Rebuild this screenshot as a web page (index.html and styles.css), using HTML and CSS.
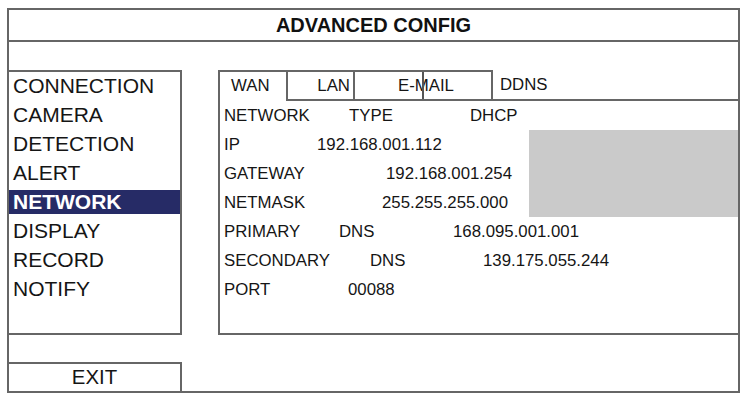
FILE: index.html
```html
<!DOCTYPE html>
<html lang="en">
<head>
    <meta charset="UTF-8">
    <title>Advanced Config</title>
    <link rel="stylesheet" href="styles.css">
</head>
<body>
    <div class="frame">
        <div class="title">ADVANCED CONFIG</div>
        <div class="main">
            <div class="side">
                <ul class="menu">
                    <li>CONNECTION</li>
                    <li>CAMERA</li>
                    <li>DETECTION</li>
                    <li>ALERT</li>
                    <li class="active">NETWORK</li>
                    <li>DISPLAY</li>
                    <li>RECORD</li>
                    <li>NOTIFY</li>
                </ul>
                <div class="exit">EXIT</div>
            </div>
            <div class="panel">
                <div class="tabs">
                    <div class="tab tab-wan">WAN</div>
                    <div class="tab tab-lan">LAN</div>
                    <div class="tab tab-mail">E-MAIL</div>
                    <div class="tab tab-ddns">DDNS</div>
                </div>
                <div class="fields">
                    <div class="row wide r-network"><span>NETWORK</span><span>TYPE</span><span>DHCP</span></div>
                    <div class="row r-ip"><span>IP</span><span>192.168.001.112</span></div>
                    <div class="preview"></div>
                    <div class="row r-gateway"><span>GATEWAY</span><span>192.168.001.254</span></div>
                    <div class="row r-netmask"><span>NETMASK</span><span>255.255.255.000</span></div>
                    <div class="row wide r-primary"><span>PRIMARY</span><span>DNS</span><span>168.095.001.001</span></div>
                    <div class="row wide r-secondary"><span>SECONDARY</span><span>DNS</span><span>139.175.055.244</span></div>
                    <div class="row wide r-port"><span>PORT</span><span>00088</span></div>
                </div>
            </div>
        </div>
    </div>
</body>
</html>
```
FILE: styles.css
```css
body {
    margin: 8px 0 0 7px;
    background-color: #fff;
    font-family: "Liberation Sans", Arial, sans-serif;
    color: #151515;
}

.frame {
    box-sizing: border-box;
    width: 733px;
    height: 385px;
    border: 2px solid #666;
    display: flex;
    flex-direction: column;
}

.title {
    box-sizing: border-box;
    height: 32px;
    border-bottom: 2px solid #666;
    display: flex;
    align-items: center;
    justify-content: center;
    font-size: 20px;
    font-weight: bold;
    color: #111;
}

.main {
    flex: 1;
    display: flex;
}

/* left column */
.side {
    width: 173px;
    display: flex;
    flex-direction: column;
}

.menu {
    box-sizing: border-box;
    list-style: none;
    margin: 28px 0 0 0;
    padding: 2px 0 0 0;
    height: 265px;
    border-top: 2px solid #666;
    border-right: 2px solid #666;
    border-bottom: 2px solid #666;
}

.menu li {
    height: 24px;
    line-height: 24px;
    margin-bottom: 5px;
    padding-left: 4px;
    font-size: 21px;
}

.menu li.active {
    background-color: #262b66;
    color: #fff;
    font-weight: bold;
}

.exit {
    box-sizing: border-box;
    flex: 1;
    margin-top: 27px;
    border-top: 2px solid #666;
    border-right: 2px solid #666;
    display: flex;
    align-items: center;
    justify-content: center;
    font-size: 20.4px;
}

/* right panel */
.panel {
    box-sizing: border-box;
    flex: 1;
    margin: 28px 0 0 36px;
    height: 265px;
    border-left: 2px solid #666;
    border-bottom: 2px solid #666;
    font-size: 16.8px;
}

.tabs {
    display: flex;
    height: 31px;
}

.tab {
    box-sizing: border-box;
    display: flex;
    align-items: center;
    border-top: 2px solid #666;
    border-right: 2px solid #666;
    border-bottom: 2px solid #666;
}

.tab-wan {
    width: 68px;
    padding: 0 0 2px 11px;
    border-bottom: none;
}

.tab-lan {
    width: 67px;
    justify-content: flex-end;
    padding-right: 3px;
}

.tab-mail {
    position: relative;
    width: 138px;
    padding-left: 43px;
}

/* the divider line runs through the text */
.tab-mail::after {
    content: "";
    position: absolute;
    left: 67px;
    top: 0;
    bottom: 0;
    width: 2px;
    background-color: #555;
}

.tab-ddns {
    flex: 1;
    border-top: none;
    border-right: none;
    padding-left: 7px;
}

.fields {
    display: grid;
    grid-template-columns: 1fr 209px;
    grid-auto-rows: 29px;
}

.row {
    grid-column: 1;
    display: flex;
    align-items: center;
    padding-left: 4px;
    white-space: nowrap;
}

.row.wide {
    grid-column: 1 / -1;
}

.preview {
    grid-column: 2;
    grid-row: 2 / 5;
    background-color: #cacaca;
}

.r-network span:nth-child(1) { width: 125px; }
.r-network span:nth-child(2) { width: 121px; }
.r-ip span:nth-child(1) { width: 93px; }
.r-gateway span:nth-child(1) { width: 162px; }
.r-netmask span:nth-child(1) { width: 158px; }
.r-primary span:nth-child(1) { width: 115px; }
.r-primary span:nth-child(2) { width: 114px; }
.r-secondary span:nth-child(1) { width: 146px; }
.r-secondary span:nth-child(2) { width: 113px; }
.r-port span:nth-child(1) { width: 124px; }
```
